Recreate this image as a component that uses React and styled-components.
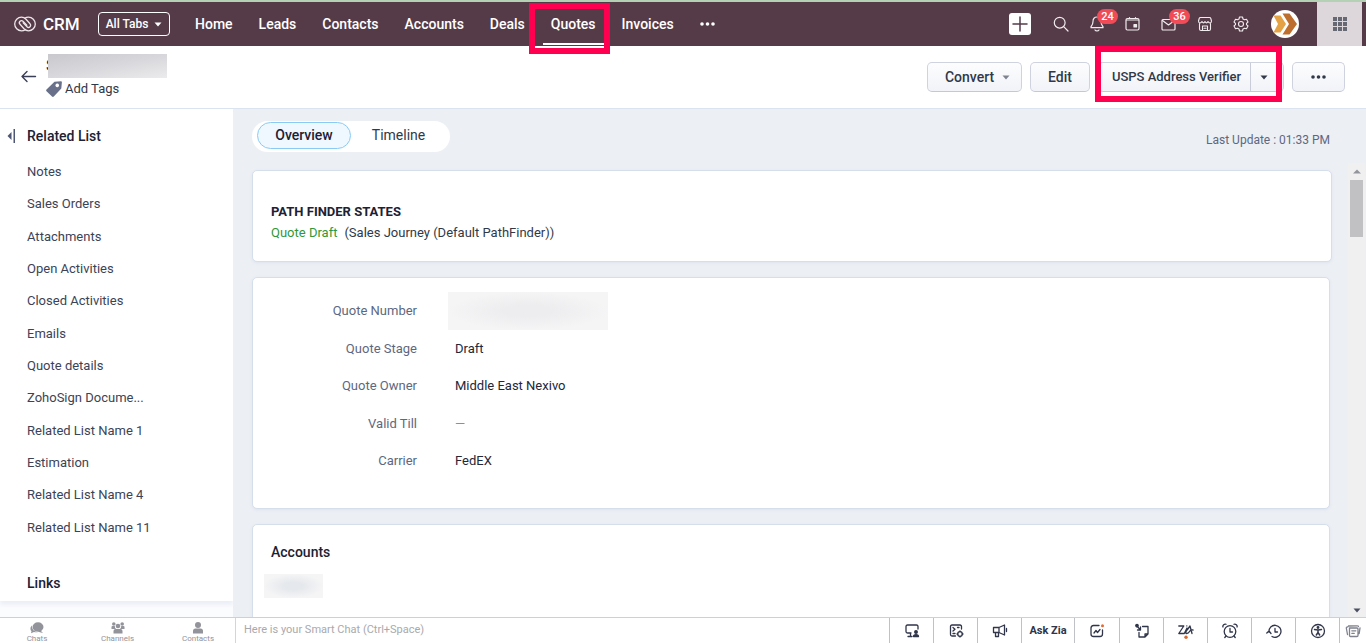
import styled, { createGlobalStyle, css } from 'styled-components';

const tabs = ['Home', 'Leads', 'Contacts', 'Accounts', 'Deals', 'Quotes', 'Invoices'];

const relatedLists = [
    'Notes',
    'Sales Orders',
    'Attachments',
    'Open Activities',
    'Closed Activities',
    'Emails',
    'Quote details',
    'ZohoSign Docume...',
    'Related List Name 1',
    'Estimation',
    'Related List Name 4',
    'Related List Name 11',
];

const fields = [
    { label: 'Quote Number', value: null },
    { label: 'Quote Stage', value: 'Draft' },
    { label: 'Quote Owner', value: 'Middle East Nexivo' },
    { label: 'Valid Till', value: '—', empty: true },
    { label: 'Carrier', value: 'FedEX' },
];

const GlobalStyle = createGlobalStyle`
    * { box-sizing: border-box; }
    body {
        margin: 0;
        background: #fff;
        color: #313949;
        font: 13px/16px Roboto, "Liberation Sans", sans-serif;
    }
    button, input { font: inherit; color: inherit; }
    button { padding: 0; border: 0; background: none; cursor: pointer; }
    a { color: inherit; text-decoration: none; }
    ul { margin: 0; padding: 0; list-style: none; }
    h1, h2, dl, dd, dt, p { margin: 0; }
    svg { display: block; flex: none; }
`;

const Page = styled.div`
    height: 100vh;
    display: flex;
    flex-direction: column;
    overflow: hidden;
`;

const TopBar = styled.header`
    display: flex;
    align-items: center;
    height: 46px;
    padding: 0 4px 0 14px;
    background: #553b48;
    border-top: 2px solid #b4d0b5;
    color: #fff;
`;

const Brand = styled.a`
    display: flex;
    align-items: center;
    gap: 7px;
    width: 84px;
    font-size: 17px;
    font-weight: 500;
`;

const AllTabs = styled.button`
    display: flex;
    align-items: center;
    justify-content: center;
    gap: 6px;
    width: 72px;
    height: 24px;
    border: 1px solid #fff;
    border-radius: 4px;
    font-size: 12px;
    font-weight: 500;
`;

const Nav = styled.nav`
    display: flex;
    align-self: stretch;
    align-items: center;
    gap: 10px;
    margin-left: 17px;
`;

const NavLink = styled.a`
    display: flex;
    align-items: center;
    position: relative;
    height: 100%;
    padding: 0 8px;
    font-size: 14px;
    font-weight: 500;

    ${({ $active }) => $active && css`
        &::after {
            content: '';
            position: absolute;
            left: 0;
            right: 0;
            bottom: 1px;
            height: 2px;
            background: #fff;
        }
    `}
`;

const Highlight = styled.span`
    position: absolute;
    inset: ${({ $inset }) => $inset};
    z-index: 2;
    border: 6px solid #ff0050;
    pointer-events: none;
`;

const Tools = styled.div`
    display: flex;
    align-items: center;
    align-self: stretch;
    margin-left: auto;
`;

const AddButton = styled.button`
    display: grid;
    place-items: center;
    width: 22px;
    height: 22px;
    margin-right: 12px;
    border-radius: 3px;
    background: #fff;
    color: #553b48;
`;

const ToolButton = styled.button`
    display: grid;
    place-items: center;
    position: relative;
    width: 36px;
    height: 30px;
    color: #f1ebee;
`;

const Badge = styled.span`
    position: absolute;
    left: 18px;
    top: 0;
    min-width: 21px;
    padding: 0 3px;
    border-radius: 8px;
    background: #f04b57;
    color: #fff;
    font-size: 11px;
    line-height: 15px;
    font-weight: 500;
    text-align: center;
`;

const Avatar = styled.button`
    margin: 0 18px 0 12px;
`;

const AppsButton = styled.button`
    display: grid;
    place-items: center;
    align-self: stretch;
    width: 45px;
    background: #ddd6da;
    color: #666973;
`;

const RecordBar = styled.div`
    display: flex;
    align-items: center;
    height: 63px;
    padding: 0 21px;
    border-bottom: 1px solid #dae3ef;
`;

const BackButton = styled.button`
    width: 25px;
    color: #3b3f56;
`;

const Title = styled.h1`
    position: relative;
    width: 121px;
    height: 24px;
    overflow: hidden;
    color: #22273a;
    font-size: 17px;
    line-height: 22px;
    font-weight: 700;
`;

const Mask = styled.span`
    position: absolute;
    inset: 0 0 0 2px;
    background: linear-gradient(170deg, #c9c9cd, #d8d8dc 50%, #ebebed);
`;

const AddTags = styled.button`
    display: flex;
    align-items: center;
    gap: 3px;
    height: 22px;
    font-size: 13px;
`;

const Actions = styled.div`
    display: flex;
    gap: 8px;
    margin-left: auto;
`;

const buttonLook = css`
    border: 1px solid #cfd3df;
    border-bottom-color: #c3c8d6;
    border-radius: 5px;
    background: linear-gradient(#fdfdfe, #f1f3f8);
    color: #313949;
`;

const ActionButton = styled.button`
    ${buttonLook}
    display: flex;
    align-items: center;
    justify-content: center;
    gap: 8px;
    width: ${({ $width }) => $width}px;
    height: 30px;
    padding: ${({ $menu }) => ($menu ? '0 0 0 6px' : 0)};
    font-size: 14px;
    font-weight: 500;
`;

const SplitButton = styled.div`
    ${buttonLook}
    display: flex;
    position: relative;
    height: 30px;
`;

const SplitMain = styled.button`
    width: 152px;
    padding-left: 4px;
    border-right: 1px solid #c9cdd9;
    font-size: 13px;
    font-weight: 500;
`;

const SplitToggle = styled.button`
    width: 32px;
    padding-left: 9px;
`;

const Body = styled.div`
    flex: 1;
    min-height: 0;
    display: flex;
    background: #eceff4;
`;

const Sidebar = styled.aside`
    width: 233px;
    padding: 18px 7px 0;
    margin-bottom: 16px;
    background: #fff;
    box-shadow: 0 4px 4px #eceff7, 0 16px 0 #fbfcfe;
`;

const SideHead = styled.div`
    display: flex;
    align-items: center;
    gap: 11px;
    height: 18px;
`;

const SideTitle = styled.h2`
    color: #1d2134;
    font-size: 14px;
    line-height: 18px;
    font-weight: 500;
`;

const RelatedList = styled.ul`
    display: grid;
    grid-auto-rows: 1fr;
    align-items: center;
    height: 388px;
    margin: 11px 0 30px;
    padding-left: 20px;
    color: #3c4356;
`;

const LinksTitle = styled(SideTitle)`
    padding-left: 20px;
`;

const Main = styled.main`
    flex: 1;
    min-width: 0;
    display: flex;
    flex-direction: column;
`;

const ViewBar = styled.div`
    display: flex;
    justify-content: space-between;
    align-items: center;
    height: 54px;
    padding: 0 36px 0 19px;
`;

const Switcher = styled.div`
    display: flex;
    gap: 4px;
    padding: 1px 8px 3px 5px;
    border-radius: 16px;
    background: #fff;
`;

const SwitchButton = styled.button`
    width: ${({ $active }) => ($active ? 94 : 87)}px;
    height: 27px;
    border: 1px solid ${({ $active }) => ($active ? '#8acbf5' : 'transparent')};
    border-radius: 14px;
    background: ${({ $active }) => ($active ? '#eff7ff' : 'transparent')};
    color: ${({ $active }) => ($active ? '#1d2134' : '#313949')};
    font-size: 14px;
    font-weight: ${({ $active }) => ($active ? 500 : 400)};
`;

const LastUpdate = styled.span`
    padding-top: 8px;
    color: #5d6880;
    font-size: 12px;
`;

const ScrollArea = styled.div`
    flex: 1;
    min-height: 0;
    display: flex;
    padding-right: 1px;
`;

const Cards = styled.div`
    flex: 1;
    min-width: 0;
    padding: 7px 18px 0 19px;
    overflow: hidden;
`;

const Card = styled.section`
    margin: 0 ${({ $wide }) => ($wide ? '-2px' : '0')} 15px 0;
    padding: ${({ $padding }) => $padding};
    border: 1px solid #d5dfec;
    border-radius: 5px;
    background: #fff;
    box-shadow: 0 1px 3px #dfe4ed;
`;

const CardTitle = styled.h2`
    color: #1d2134;
    font-size: ${({ $size }) => $size}px;
    line-height: 20px;
    font-weight: ${({ $bold }) => ($bold ? 700 : 500)};
`;

const PathState = styled.p`
    display: flex;
    gap: 7px;
    line-height: 22px;
`;

const StateLink = styled.a`
    && { color: #319837; }
`;

const FieldList = styled.dl`
    display: grid;
    grid-template-columns: 164px 1fr;
    grid-auto-rows: 1fr;
    align-items: center;
    column-gap: 38px;
    height: 188px;
`;

const FieldLabel = styled.dt`
    color: #5d6880;
    text-align: right;
`;

const FieldValue = styled.dd`
    color: ${({ $empty }) => ($empty ? '#8b8f9b' : '#22283a')};
`;

const Blurred = styled.span`
    display: block;
    width: ${({ $wide }) => ($wide ? 160 : 59)}px;
    height: ${({ $wide }) => ($wide ? 38 : 24)}px;
    margin-left: -7px;
    background: radial-gradient(closest-side, ${({ $wide }) => ($wide ? '#ededef' : '#e5e8ec')} 30%, #f5f5f6);
`;

const AccountName = styled.div`
    padding-top: 12px;
`;

const Scrollbar = styled.div`
    display: flex;
    flex-direction: column;
    align-items: center;
    width: 17px;
    padding: 6px 0 4px;
    background: #f0f0f0;
    color: #4b4f60;
`;

const Thumb = styled.span`
    width: 13px;
    height: 57px;
    margin: 6px 0 auto;
    background: #c1c1c3;
`;

const Footer = styled.footer`
    display: flex;
    height: 26px;
    border-top: 1px solid #cfd0d5;
    background: #fff;
`;

const ChatTabs = styled.div`
    display: flex;
    justify-content: space-between;
    width: 236px;
    padding: 4px 17px 0;
    border-right: 1px solid #d5d5d8;
`;

const ChatTab = styled.button`
    display: flex;
    flex-direction: column;
    align-items: center;
    width: 40px;
    color: #93939b;
    font-size: 8px;
    line-height: 9px;
`;

const ChatInput = styled.input`
    flex: 1;
    min-width: 0;
    padding: 0 8px 2px;
    border: 0;
    outline: 0;
    font-size: 11px;

    &::placeholder { color: #a9a9ad; }
`;

const FooterButton = styled.button`
    display: grid;
    place-items: center;
    width: ${({ $width }) => $width || 44}px;
    border-left: 1px solid #bfc1c8;
    color: ${({ $muted }) => ($muted ? '#7f828d' : '#30354a')};
    font-size: 11px;
    font-weight: 700;
`;

const Icon = ({ size = 16, children, ...rest }) => (
    <svg width={size} height={size} viewBox="0 0 16 16" fill="none" stroke="currentColor"
        strokeWidth="1.2" strokeLinecap="round" strokeLinejoin="round" aria-hidden="true" {...rest}>
        {children}
    </svg>
);

const Caret = ({ up, color = 'currentColor' }) => (
    <svg width="8" height="5" viewBox="0 0 8 5" fill={color} aria-hidden="true">
        <path d={up ? 'M0 4.5 4 .5l4 4z' : 'M.5.5h7L4 4.5z'} />
    </svg>
);

const Dots = ({ width = 15 }) => (
    <svg width={width} height="4" viewBox="0 0 15 4" fill="currentColor" aria-hidden="true">
        <circle cx="2" cy="2" r="1.8" />
        <circle cx="7.5" cy="2" r="1.8" />
        <circle cx="13" cy="2" r="1.8" />
    </svg>
);

const LogoIcon = () => (
    <svg width="22" height="16" viewBox="0 0 22 16" fill="none" stroke="#eee5e9" strokeWidth="1.3"
        strokeLinecap="round" aria-hidden="true">
        <path d="M11 14C10 14.600 8.500 14.800 7.500 14.800A6.800 6.800 0 0 1 7.500 1.200c2 0 3.500 1 4.500 2l4 4.500a2 2 0 0 1-3 3L9.200 6.800" />
        <path d="M11 2c1-.6 2.500-.8 3.500-.8a6.800 6.800 0 0 1 0 13.600c-2 0-3.500-1-4.500-2L6 8.300a2 2 0 0 1 3-3l3.800 3.900" />
    </svg>
);

const SearchIcon = () => (
    <Icon><circle cx="6.7" cy="6.7" r="5.4" /><path d="m10.7 10.7 4.3 4.3" /></Icon>
);

const BellIcon = () => (
    <Icon>
        <path d="M8 1C5.2 1 4 3 4 5.5c0 3-1 4-2 5.2v1h12v-1c-1-1.2-2-2.2-2-5.2C12 3 10.8 1 8 1zM6 14c.8 1.2 3.2 1.2 4 0" />
    </Icon>
);

const CalendarIcon = () => (
    <Icon>
        <rect x="1" y="2.5" width="13" height="11.5" rx="1.5" />
        <path d="M4.5 1.500v1M10.500 1.500v1M1.5 4h12" />
        <path d="M9 8.5h2.500V11H9z" fill="currentColor" />
    </Icon>
);

const MailIcon = () => (
    <Icon><rect x="1" y="3.500" width="13" height="10.500" rx="1" /><path d="m1.500 4.500 6 4.500 6-4.500" /></Icon>
);

const StoreIcon = () => (
    <Icon strokeWidth="1.1">
        <path d="M3.500 1.500h9q1 0 1.300 1L14.500 5c0 2.500-2.500 2.500-3.500.5C10 7.300 9 7.300 8 5.500 7 7.300 6 7.300 5 5.500 4 7.500 1.500 7.500 1.500 5l.7-2.500q.3-1 1.300-1z" />
        <path d="M2.500 7.500V13q0 1.500 1.500 1.500h8q1.500 0 1.500-1.500V7.500M5.500 14.500V10h5v4.500M7 12.200h2" />
    </Icon>
);

const GearIcon = () => (
    <Icon strokeWidth="1.1">
        <path d="M6.500 1h3l.5 2 1.500.8 2-.6L15 6l-1.500 1.300v1.400L15 10l-1.500 2.800-2-.6-1.500.8-.5 2h-3L6 13l-1.500-.8-2 .6L1 10l1.500-1.300V7.300L1 6l1.500-2.800 2 .6L6 3z" />
        <circle cx="8" cy="8" r="2.500" />
    </Icon>
);

const AvatarIcon = () => (
    <svg width="28" height="28" viewBox="0 0 28 28" aria-hidden="true">
        <circle cx="14" cy="14" r="14" fill="#fff" />
        <path d="M2.500 5.500h7l5.500 8.500-5.500 8.500h-7L7 14z" fill="#e5a146" />
        <path d="M11.500 3.500h7L26 14l-7.500 10.500h-7L18 14z" fill="#bd6d2e" />
    </svg>
);

const AppsIcon = () => (
    <svg width="14" height="14" viewBox="0 0 14 14" fill="currentColor" aria-hidden="true">
        {[0, 5, 10].map((y) => [0, 5, 10].map((x) => (
            <rect key={`${x}-${y}`} x={x} y={y} width="4" height="4" />
        )))}
    </svg>
);

const TagIcon = () => (
    <svg width="16" height="16" viewBox="0 0 16 16" fill="#69718a" aria-hidden="true">
        <path fillRule="evenodd" d="M8.500.8 15 .3q.9 0 .9 1l-.6 6.200-7.500 8q-.9.800-1.800 0L.5 10.200q-.8-.9 0-1.800zM11.200 2.600a1.800 1.800 0 1 0 .1 0z" />
    </svg>
);

const footerTools = [
    {
        label: 'Screen share',
        icon: <><path d="M14 6V3.500Q14 2 12.500 2h-9Q2 2 2 3.500v5Q2 10 3.500 10H7M6.500 10v3.500M4 13.500h4" /><circle cx="12" cy="9" r="1.300" fill="currentColor" /><path d="M9.500 13.500c0-2.500 5-2.500 5 0z" fill="currentColor" /></>,
    },
    {
        label: 'Canvas',
        icon: <><path d="M13.500 6V3.500Q13.500 2 12 2H4Q2.500 2 2.500 3.500v8Q2.500 13 4 13h3.500M5 4.500 7 6.200 5 8M5 10.500h2M9.500 4.500H11" /><circle cx="12" cy="11" r="2.300" /><path d="M12 8v.7M12 13.300v.7M9 11h.7M14.300 11h.7" /></>,
    },
    {
        label: 'Announcements',
        icon: <><path d="M1.500 4.500H7l5.500-2.500v10L7 9.500H1.500zM7 4.500v5M3.500 9.500v4h3v-4M14.500 5.500v3" /></>,
    },
    { label: 'Ask Zia', text: 'Ask Zia', width: 53 },
    {
        label: 'Insights',
        width: 45,
        icon: <><path d="M10 2.500H4.500Q2 2.500 2 5v6q0 2.500 2.500 2.500h6.500q2.500 0 2.500-2.500V7M5 10l2-2.500 1.500 2L11 6.500" /><circle cx="13.500" cy="2.800" r="1.500" fill="#e06a35" stroke="none" /></>,
    },
    {
        label: 'Notes',
        icon: <><path d="M8.500 3.500H14v7.500L11 14H5V9.500M14 11h-3v3" /><path d="m2.500 2.500 4 4.500M6.500 4v3h-3" /><circle cx="3" cy="2.600" r="1.200" fill="currentColor" /></>,
    },
    {
        label: 'Zia',
        icon: <><path d="M.8 3h5L.8 10.500h5.500L9 5M8.500 10.500C7 10.500 8 8 9.500 6.500L12 3l2 7.500M8.500 10.500q2 0 3-2t3.500-1.500M8.800 2.800v.1" /><circle cx="8" cy="14.300" r="1.700" fill="#d9692f" stroke="none" /></>,
    },
    {
        label: 'Reminders',
        icon: <><circle cx="8" cy="8.500" r="5.800" /><path d="M8 5.500v3.500h2.500M1 4C.3 2.500 2.500.5 4 1.300M15 4c.7-1.500-1.500-3.500-3-2.700M4 13l-1.200 1.500M12 13l1.200 1.500" /></>,
    },
    {
        label: 'Recent items',
        icon: <><path d="M3 9a6 6 0 1 1 3 4.500M.8 10 3 8l2 2.500M9 5.500v3.500h2.500" /></>,
    },
    {
        label: 'Accessibility',
        icon: <><circle cx="8" cy="8" r="6.500" /><circle cx="8" cy="4.500" r=".8" fill="currentColor" /><path d="M4.500 6.500 8 7l3.500-.5M8 7v2.500L6.300 12M8 9.500 9.700 12" strokeWidth="1.500" /></>,
    },
    {
        label: 'Windows',
        width: 27,
        muted: true,
        icon: <><path d="M4.500 5h7.500q1 0 1 1v6.500q0 1-1 1H5.500q-1 0-1-1zM2.500 11.500 1.300 5q0-.8.700-1l.8-.2M3.500 3 12 2.800q1.500 0 1.500.8M15 5l-.8 5.500M6.800 7.800h4M6.800 10.300h2.500" /></>,
    },
];

const ChatsIcon = () => (
    <svg width="14" height="12" viewBox="0 0 14 12" fill="currentColor" aria-hidden="true">
        <ellipse cx="8" cy="5" rx="5.500" ry="4.700" />
        <path d="m10 8 3 3-5-1.300z" />
        <path d="M2 3.500C-.2 5.500.3 8 1.500 9L1 11.300 4 10q2 .6 4 0C4.500 10 1.500 7.500 2 3.500z" />
    </svg>
);

const ChannelsIcon = () => (
    <svg width="14" height="12" viewBox="0 0 14 12" fill="currentColor" aria-hidden="true">
        <circle cx="2.800" cy="2" r="1.800" />
        <circle cx="11.200" cy="2" r="1.800" />
        <circle cx="7" cy="4" r="2.300" />
        <path d="M.5 7V5q0-1 1-1h2.300q0 2 1.200 3zM13.500 7V5q0-1-1-1h-2.300q0 2-1.200 3zM2.500 11.500V9q0-2 2-2h5q2 0 2 2v2.500z" />
    </svg>
);

const ContactIcon = () => (
    <svg width="14" height="12" viewBox="0 0 14 12" fill="currentColor" aria-hidden="true">
        <circle cx="7" cy="3" r="3" />
        <path d="M2 11.500V9q0-2.500 2.500-2.500h5Q12 6.500 12 9v2.500z" />
    </svg>
);

const Header = () => (
    <TopBar>
        <Brand href="#"><LogoIcon />CRM</Brand>
        <AllTabs>All Tabs <Caret /></AllTabs>
        <Nav>
            {tabs.map((tab) => (
                <NavLink key={tab} href={`#${tab}`} $active={tab === 'Quotes'}>
                    {tab}
                    {tab === 'Quotes' && <Highlight $inset="1px -6px -8px -14px" />}
                </NavLink>
            ))}
            <NavLink href="#more" aria-label="More tabs"><Dots /></NavLink>
        </Nav>
        <Tools>
            <AddButton aria-label="Create"><Icon strokeWidth="1.500"><path d="M8 1v14M1 8h14" /></Icon></AddButton>
            <ToolButton aria-label="Search"><SearchIcon /></ToolButton>
            <ToolButton aria-label="Notifications"><BellIcon /><Badge>24</Badge></ToolButton>
            <ToolButton aria-label="Calendar"><CalendarIcon /></ToolButton>
            <ToolButton aria-label="Mail"><MailIcon /><Badge>36</Badge></ToolButton>
            <ToolButton aria-label="Marketplace"><StoreIcon /></ToolButton>
            <ToolButton aria-label="Setup"><GearIcon /></ToolButton>
            <Avatar aria-label="Profile"><AvatarIcon /></Avatar>
            <AppsButton aria-label="All apps"><AppsIcon /></AppsButton>
        </Tools>
    </TopBar>
);

const RecordHeader = () => (
    <RecordBar>
        <BackButton aria-label="Back">
            <Icon strokeWidth="1.400"><path d="M14.500 7.500H1M6 2.500l-5 5 5 5" /></Icon>
        </BackButton>
        <div>
            <Title>S<Mask /></Title>
            <AddTags><TagIcon />Add Tags</AddTags>
        </div>
        <Actions>
            <ActionButton $width={95} $menu>Convert <Caret color="#7d8291" /></ActionButton>
            <ActionButton $width={60}>Edit</ActionButton>
            <SplitButton>
                <SplitMain>USPS Address Verifier</SplitMain>
                <SplitToggle aria-label="More verifier options"><Caret /></SplitToggle>
                <Highlight $inset="-17px 1px -11px -4px" />
            </SplitButton>
            <ActionButton $width={53} aria-label="More actions"><Dots /></ActionButton>
        </Actions>
    </RecordBar>
);

const App = () => (
    <>
        <GlobalStyle />
        <Page>
            <Header />
            <RecordHeader />
            <Body>
                <Sidebar>
                    <SideHead>
                        <button aria-label="Collapse list">
                            <svg width="9" height="14" viewBox="0 0 9 14" fill="#4d5674" aria-hidden="true">
                                <path d="M4.500 3v8L.5 7zM6.500 0H8v14H6.500z" />
                            </svg>
                        </button>
                        <SideTitle>Related List</SideTitle>
                    </SideHead>
                    <RelatedList>
                        {relatedLists.map((name) => (
                            <li key={name}><a href="#related">{name}</a></li>
                        ))}
                    </RelatedList>
                    <LinksTitle>Links</LinksTitle>
                </Sidebar>
                <Main>
                    <ViewBar>
                        <Switcher>
                            <SwitchButton $active>Overview</SwitchButton>
                            <SwitchButton>Timeline</SwitchButton>
                        </Switcher>
                        <LastUpdate>Last Update : 01:33 PM</LastUpdate>
                    </ViewBar>
                    <ScrollArea>
                        <Cards>
                            <Card $wide $padding="31px 18px 17px">
                                <CardTitle $size={13} $bold>PATH FINDER STATES</CardTitle>
                                <PathState>
                                    <StateLink href="#state">Quote Draft</StateLink>
                                    <span>(Sales Journey (Default PathFinder))</span>
                                </PathState>
                            </Card>
                            <Card $padding="14px 0 28px">
                                <FieldList>
                                    {fields.map(({ label, value, empty }) => [
                                        <FieldLabel key={label}>{label}</FieldLabel>,
                                        <FieldValue key={`${label}-value`} $empty={empty}>
                                            {value || <Blurred $wide />}
                                        </FieldValue>,
                                    ])}
                                </FieldList>
                            </Card>
                            <Card $padding="17px 18px 60px">
                                <CardTitle $size={14}>Accounts</CardTitle>
                                <AccountName><Blurred /></AccountName>
                            </Card>
                        </Cards>
                        <Scrollbar>
                            <Caret up color="#92959c" />
                            <Thumb />
                            <Caret />
                        </Scrollbar>
                    </ScrollArea>
                </Main>
            </Body>
            <Footer>
                <ChatTabs>
                    <ChatTab><ChatsIcon />Chats</ChatTab>
                    <ChatTab><ChannelsIcon />Channels</ChatTab>
                    <ChatTab><ContactIcon />Contacts</ChatTab>
                </ChatTabs>
                <ChatInput aria-label="Smart Chat" placeholder="Here is your Smart Chat (Ctrl+Space)" />
                {footerTools.map(({ label, icon, text, width, muted }) => (
                    <FooterButton key={label} aria-label={label} $width={width} $muted={muted}>
                        {text || <Icon strokeWidth="1.300">{icon}</Icon>}
                    </FooterButton>
                ))}
            </Footer>
        </Page>
    </>
);

export default App;
